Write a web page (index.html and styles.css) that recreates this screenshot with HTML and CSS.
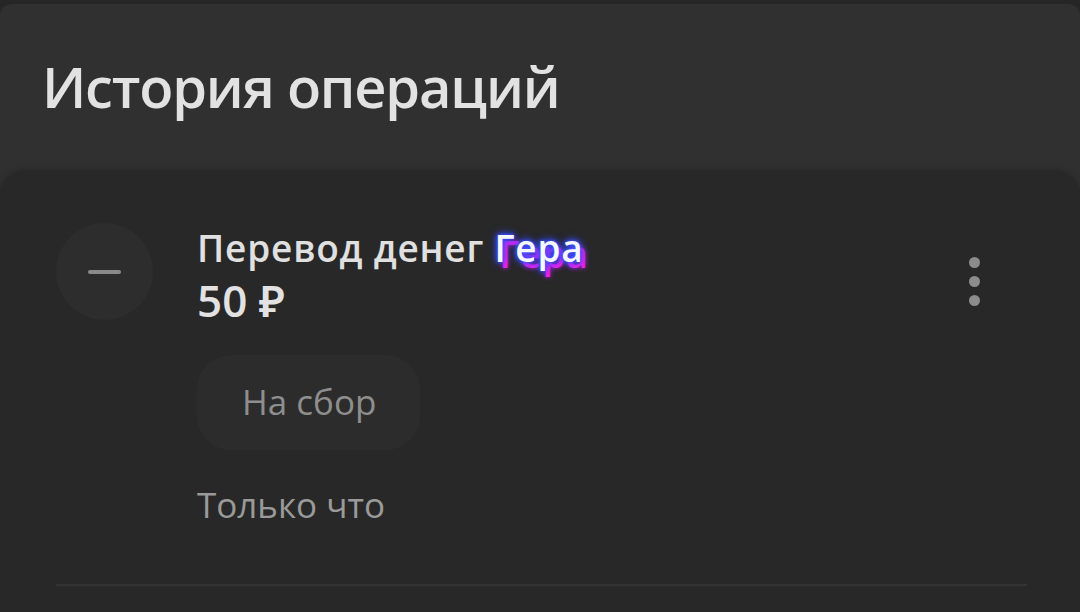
FILE: index.html
```html
<!DOCTYPE html>
<html lang="ru">
<head>
<meta charset="utf-8">
<link rel="stylesheet" href="styles.css">
</head>
<body>
<div class="page">
  <header class="header">
    <h1 class="title">История операций</h1>
  </header>
  <section class="card">
    <div class="op">
      <div class="op-icon"><span class="minus"></span></div>
      <div class="op-body">
        <div class="op-title">Перевод денег <span class="glow">Гера</span></div>
        <div class="op-amount">50 ₽</div>
        <div class="pill">На сбор</div>
        <div class="op-time">Только что</div>
      </div>
      <div class="more"><span></span><span></span><span></span></div>
    </div>
    <div class="divider"></div>
  </section>
</div>
</body>
</html>
```

FILE: styles.css
```css
html, body {
  margin: 0;
  padding: 0;
  background: #262626;
  height: 100%;
  overflow: hidden;
}
body {
  font-family: "Open Sans", "Noto Sans", sans-serif;
}
.page {
  margin-top: 4px;
  background: #303030;
  border-radius: 12px 12px 0 0;
  min-height: 608px;
}
.header {
  height: 168px;
  padding-left: 42px;
  display: flex;
  align-items: flex-start;
}
.title {
  margin: 0;
  padding-top: 44px;
  font-size: 56px;
  font-weight: 600;
  color: #e2e2e2;
  line-height: 1.362;
  letter-spacing: -1.2px;
}
.card {
  background: #282828;
  border-radius: 26px 26px 0 0;
  box-shadow: 0 -2px 6px rgba(0,0,0,0.25);
  padding: 51px 53px 0 56px;
  min-height: 400px;
}
.op {
  display: flex;
  align-items: flex-start;
}
.op-icon {
  width: 97px;
  height: 97px;
  border-radius: 50%;
  background: #2d2d2d;
  display: flex;
  align-items: center;
  justify-content: center;
  flex: none;
}
.minus {
  width: 33px;
  height: 4px;
  border-radius: 2px;
  background: #8a8a8a;
}
.op-body {
  margin-left: 44px;
  padding-top: 0;
  flex: 1;
}
.op-title {
  font-size: 37px;
  font-weight: 600;
  color: #e0e0e0;
  line-height: 1.33;
  letter-spacing: 0.8px;
}
.glow {
  color: #f6f7ff;
  text-shadow:
    0 0 2px #3a50ff,
    0 0 4px #3a50ff,
    0 0 7px #3a50ff,
    0 0 10px #2f40ff,
    5px 6px 0 #ee22ee,
    5px 6px 5px #d020ff;
}
.op-amount {
  font-size: 44px;
  font-weight: 600;
  color: #e2e2e2;
  line-height: 1.362;
  margin-top: -1px;
}
.pill {
  display: inline-block;
  margin-top: 24px;
  padding: 23px 44px 24px 45px;
  border-radius: 34px;
  background: #2c2c2c;
  font-size: 35px;
  color: #8e8e8e;
  line-height: 1.362;
}
.op-time {
  margin-top: 31px;
  font-size: 35px;
  color: #9a9a9a;
  line-height: 1.362;
}
.more {
  display: flex;
  flex-direction: column;
  gap: 8px;
  margin-top: 34px;
  margin-right: 47px;
}
.more span {
  width: 11px;
  height: 11px;
  border-radius: 50%;
  background: #8c8c8c;
}
.divider {
  margin-top: 56px;
  height: 2px;
  background: #343434;
}
```
